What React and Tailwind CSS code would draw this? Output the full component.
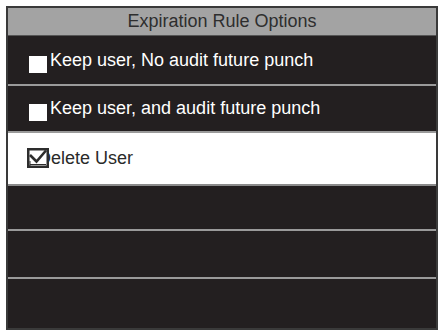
import React from "react";

function Box() {
  return <div className="w-[18px] h-[17px] bg-white mt-[8px] shrink-0" />;
}

function CheckedBox() {
  return (
    <svg
      className="absolute left-[-11px] top-[3px]"
      width="22"
      height="20"
      viewBox="0 0 22 20"
    >
      <rect x="1.25" y="1.25" width="19.5" height="17.5" fill="white" stroke="#2d2d2d" strokeWidth="2.5" />
      <path d="M3 7 L9.5 13.5 L19 2.5" fill="none" stroke="#2d2d2d" strokeWidth="2.6" />
      <path d="M3 13 L3 18 M3 16.5 L19 16.5" fill="none" stroke="#2d2d2d" strokeWidth="1" />
    </svg>
  );
}

export default function App() {
  const font = { fontFamily: '"Liberation Sans", Arial, sans-serif' };
  return (
    <div className="w-[440px] h-[331px] bg-white pt-[6px] pl-[6px]" style={font}>
      <div className="w-[432px] h-[324px] border-2 border-[#3a3a3a] flex flex-col bg-[#231f20]">
        <div className="h-[28px] shrink-0 bg-[#a3a3a3] flex items-center justify-center text-[18px] text-[#2e2e2e] border-b border-[#555]">
          Expiration Rule Options
        </div>
        <div className="h-[48px] shrink-0 flex items-center pl-[21px] text-white text-[18px] gap-[3px]">
          <Box />
          <span>Keep user, No audit future punch</span>
        </div>
        <div className="h-[2px] shrink-0 bg-[#9a9a9a]" />
        <div className="h-[45px] shrink-0 flex items-center pl-[21px] text-white text-[18px] gap-[3px]">
          <Box />
          <span>Keep user, and audit future punch</span>
        </div>
        <div className="h-[2px] shrink-0 bg-[#9a9a9a]" />
        <div className="h-[51px] shrink-0 flex items-center pl-[30px] bg-white text-[#2a2a2a] text-[18px]">
          <span className="relative">
            <CheckedBox />
            Delete User
          </span>
        </div>
        <div className="h-[2px] shrink-0 bg-[#8a8a8a]" />
        <div className="h-[43px] shrink-0" />
        <div className="h-[2px] shrink-0 bg-[#9a9a9a]" />
        <div className="h-[46px] shrink-0" />
        <div className="h-[2px] shrink-0 bg-[#9a9a9a]" />
        <div className="flex-1" />
      </div>
    </div>
  );
}
